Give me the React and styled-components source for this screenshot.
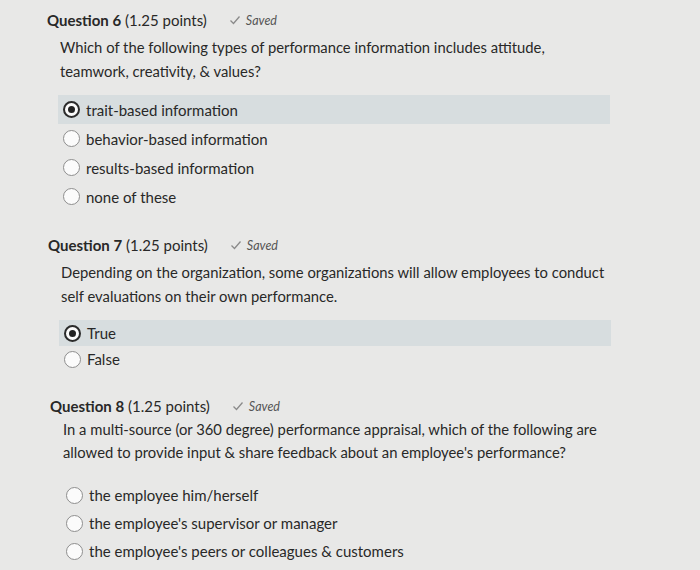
import React from 'react';
import styled, { createGlobalStyle } from 'styled-components';

const GlobalStyle = createGlobalStyle`
  html, body {
    margin: 0;
    padding: 0;
    background: #e8e8e7;
  }
  body {
    font-family: Lato, 'Open Sans', sans-serif;
    color: #282828;
  }
`;

const questions = [
  {
    number: 6,
    text: 'Which of the following types of performance information includes attitude, teamwork, creativity, & values?',
    options: ['trait-based information', 'behavior-based information', 'results-based information', 'none of these'],
    selected: 0,
    indent: 47,
    promptGap: 5,
    lineHeight: 24,
    optionsGap: 12,
    rowHeight: 29,
  },
  {
    number: 7,
    text: 'Depending on the organization, some organizations will allow employees to conduct self evaluations on their own performance.',
    options: ['True', 'False'],
    selected: 0,
    indent: 48,
    promptGap: 5,
    lineHeight: 24,
    optionsGap: 12,
    rowHeight: 26,
  },
  {
    number: 8,
    text: "In a multi-source (or 360 degree) performance appraisal, which of the following are allowed to provide input & share feedback about an employee's performance?",
    options: ['the employee him/herself', "the employee's supervisor or manager", "the employee's peers or colleagues & customers"],
    selected: -1,
    indent: 50,
    promptGap: 2,
    lineHeight: 23,
    optionsGap: 17,
    rowHeight: 28,
  },
];

function CheckIcon() {
  return (
    <svg width="12" height="10" viewBox="0 0 12 10">
      <path d="M1.5 5.5 L4.5 8.5 L10.5 1.5" fill="none" stroke="#8a8a8a" strokeWidth="1.3" />
    </svg>
  );
}

function Question({ q }) {
  return (
    <QuestionBlock $indent={q.indent}>
      <Heading>
        <Title>
          <strong>Question {q.number}</strong> (1.25 points)
        </Title>
        <SavedTag>
          <CheckIcon />
          <span>Saved</span>
        </SavedTag>
      </Heading>
      <Prompt $gap={q.promptGap} $lineHeight={q.lineHeight}>
        {q.text}
      </Prompt>
      <OptionList $gap={q.optionsGap}>
        {q.options.map((opt, i) => (
          <OptionRow key={opt} $active={i === q.selected} $height={q.rowHeight}>
            <Radio $checked={i === q.selected} />
            <OptionLabel>{opt}</OptionLabel>
          </OptionRow>
        ))}
      </OptionList>
    </QuestionBlock>
  );
}

export default function App() {
  return (
    <>
      <GlobalStyle />
      <Page>
        {questions.map(q => (
          <Question key={q.number} q={q} />
        ))}
      </Page>
    </>
  );
}

const Page = styled.main`
  width: 700px;
  height: 570px;
  overflow: hidden;
  padding-top: 10px;
  box-sizing: border-box;
  display: flex;
  flex-direction: column;
  gap: 24px;
`;

const QuestionBlock = styled.section`
  margin-left: ${p => p.$indent}px;
  width: 600px;
`;

const Heading = styled.div`
  display: flex;
  align-items: center;
  gap: 22px;
  height: 20px;
`;

const Title = styled.h2`
  margin: 0;
  font-size: 15px;
  font-weight: 400;
  line-height: 20px;
  strong {
    font-weight: 700;
  }
`;

const SavedTag = styled.span`
  display: flex;
  align-items: center;
  gap: 5px;
  font-size: 12.5px;
  font-style: italic;
  color: #555;
`;

const Prompt = styled.p`
  margin: ${p => p.$gap}px 0 0 13px;
  font-size: 14.8px;
  line-height: ${p => p.$lineHeight}px;
  max-width: 551px;
`;

const OptionList = styled.div`
  margin: ${p => p.$gap}px 0 0 11px;
  display: flex;
  flex-direction: column;
`;

const OptionRow = styled.label`
  display: flex;
  align-items: center;
  gap: 6px;
  height: ${p => p.$height}px;
  padding-left: 5px;
  background: ${p => (p.$active ? '#d7dddf' : 'transparent')};
  width: 547px;
`;

const Radio = styled.span`
  box-sizing: border-box;
  width: 17px;
  height: 17px;
  border-radius: 50%;
  background: #fbfbfb;
  border: ${p => (p.$checked ? '2px solid #2b2b2b' : '1px solid #8e8e8e')};
  display: flex;
  align-items: center;
  justify-content: center;
  &::after {
    content: '';
    width: 7px;
    height: 7px;
    border-radius: 50%;
    background: #222;
    display: ${p => (p.$checked ? 'block' : 'none')};
  }
`;

const OptionLabel = styled.span`
  font-size: 15px;
  line-height: 20px;
`;
